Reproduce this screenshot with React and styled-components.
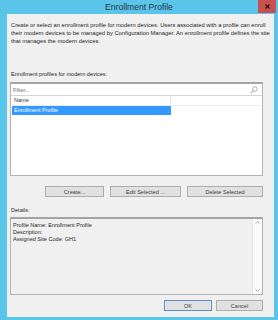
import React from "react";
import styled, { createGlobalStyle } from "styled-components";

const Global = createGlobalStyle`
  html, body { margin: 0; padding: 0; }
  body { font-family: "Liberation Sans", Arial, sans-serif; }
`;

const Window = styled.div`
  width: 278px;
  height: 320px;
  background: #5bc4e9;
  display: flex;
  flex-direction: column;
  box-sizing: border-box;
  padding: 0 4px 3px 7px;
`;

const TitleBar = styled.div`
  height: 14px;
  position: relative;
  display: flex;
  align-items: center;
  justify-content: center;
  margin-left: -7px;
  margin-right: -4px;
`;

const Title = styled.div`
  font-size: 8.6px;
  color: #233848;
  line-height: 14px;
`;

const Close = styled.div`
  position: absolute;
  top: 0;
  right: 2px;
  width: 18px;
  height: 13px;
  background: #c75050;
  display: flex;
  align-items: center;
  justify-content: center;
`;

const Body = styled.div`
  flex: 1;
  background: #f0f0f0;
  display: flex;
  flex-direction: column;
  padding: 0 11px 0 3px;
  color: #1e1e1e;
  font-size: 5.55px;
`;

const Desc = styled.div`
  margin: 7px 0 0 1px;
  line-height: 8px;
  font-size: 5.8px;
  white-space: nowrap;
`;

const Label = styled.div`
  margin: ${(p) => p.$top}px 0 0 1px;
  line-height: 7px;
  white-space: nowrap;
`;

const Panel = styled.div`
  margin-top: 4px;
  border: 1px solid #b4b4b4;
  border-top: 2px solid #a4a4a4;
  background: #fff;
  height: 91px;
  display: flex;
  flex-direction: column;
`;

const FilterRow = styled.div`
  height: 11px;
  display: flex;
  align-items: center;
  justify-content: space-between;
  padding: 0 4px 0 2px;
  border-bottom: 1px solid #d6d6d6;
  color: #6d6d6d;
`;

const ListHead = styled.div`
  display: flex;
  height: 9px;
  border-bottom: 1px solid #ececec;
  margin: 0 1px;
`;

const HeadCell = styled.div`
  width: ${(p) => p.$w}px;
  ${(p) => (p.$w ? "border-right: 1px solid #e3e3e3;" : "flex: 1;")}
  padding-left: 2px;
  line-height: 9px;
  color: #333;
`;

const Row = styled.div`
  width: 157px;
  height: 9px;
  margin: 0 1px;
  padding-left: 2px;
  line-height: 9px;
  background: ${(p) => (p.$sel ? "#3399ff" : "transparent")};
  color: ${(p) => (p.$sel ? "#fff" : "#222")};
`;

const ButtonRow = styled.div`
  display: flex;
  justify-content: flex-end;
  gap: ${(p) => p.$gap}px;
  margin-top: ${(p) => p.$top}px;
`;

const Button = styled.div`
  width: ${(p) => p.$w}px;
  height: 11px;
  box-sizing: border-box;
  background: #e1e1e1;
  border: 1px solid ${(p) => (p.$def ? "#5b8fc7" : "#adadad")};
  display: flex;
  align-items: center;
  justify-content: center;
  color: #3a3a3a;
`;

const Details = styled.div`
  margin-top: 3px;
  height: 78px;
  box-sizing: border-box;
  border: 1px solid #b4b4b4;
  border-top: 2px solid #a4a4a4;
  display: flex;
`;

const DetailsText = styled.div`
  flex: 1;
  padding: 3px 0 0 2px;
  line-height: 7px;
  color: #1e1e1e;
  white-space: nowrap;
`;

const Scroll = styled.div`
  width: 9px;
  background: #fafafa;
  border-left: 1px solid #e6e6e6;
  display: flex;
  flex-direction: column;
  justify-content: space-between;
  align-items: center;
  padding: 2px 0;
`;

const Arrow = ({ up }) => (
  <svg width="5" height="3" viewBox="0 0 5 3">
    <path
      d={up ? "M0.5 2.5 L2.5 0.5 L4.5 2.5" : "M0.5 0.5 L2.5 2.5 L4.5 0.5"}
      fill="none"
      stroke="#9a9a9a"
      strokeWidth="0.8"
    />
  </svg>
);

function App() {
  return (
    <>
      <Global />
      <Window>
        <TitleBar>
          <Title>Enrollment Profile</Title>
          <Close>
            <svg width="5" height="5" viewBox="0 0 5 5">
              <path d="M0.5 0.5 L4.5 4.5 M4.5 0.5 L0.5 4.5" stroke="#3b1414" strokeWidth="1.2" />
            </svg>
          </Close>
        </TitleBar>
        <Body>
          <Desc>
            Create or select an enrollment profile for modern devices. Users associated with a profile can enroll
            <br />
            their modern devices to be managed by Configuration Manager. An enrollment profile defines the site
            <br />
            that manages the modern devices.
          </Desc>
          <Label $top={26}>Enrollment profiles for modern devices:</Label>
          <Panel>
            <FilterRow>
              <span>Filter...</span>
              <svg width="8" height="8" viewBox="0 0 8 8">
                <circle cx="5" cy="3" r="2.3" fill="none" stroke="#a8a8a8" strokeWidth="0.9" />
                <path d="M3.4 4.6 L0.8 7.2" stroke="#a8a8a8" strokeWidth="1.1" />
              </svg>
            </FilterRow>
            <ListHead>
              <HeadCell $w={156}>Name</HeadCell>
              <HeadCell />
            </ListHead>
            <Row $sel>Enrollment Profile</Row>
          </Panel>
          <ButtonRow $gap={6} $top={10}>
            <Button $w={59}>Create...</Button>
            <Button $w={71}>Edit Selected ...</Button>
            <Button $w={76}>Delete Selected</Button>
          </ButtonRow>
          <Label $top={10}>Details:</Label>
          <Details>
            <DetailsText>
              Profile Name: Enrollment Profile
              <br />
              Description:
              <br />
              Assigned Site Code: GH1
            </DetailsText>
            <Scroll>
              <Arrow up />
              <Arrow />
            </Scroll>
          </Details>
          <ButtonRow $gap={4} $top={5}>
            <Button $w={48} $def>OK</Button>
            <Button $w={47}>Cancel</Button>
          </ButtonRow>
        </Body>
      </Window>
    </>
  );
}

export default App;
